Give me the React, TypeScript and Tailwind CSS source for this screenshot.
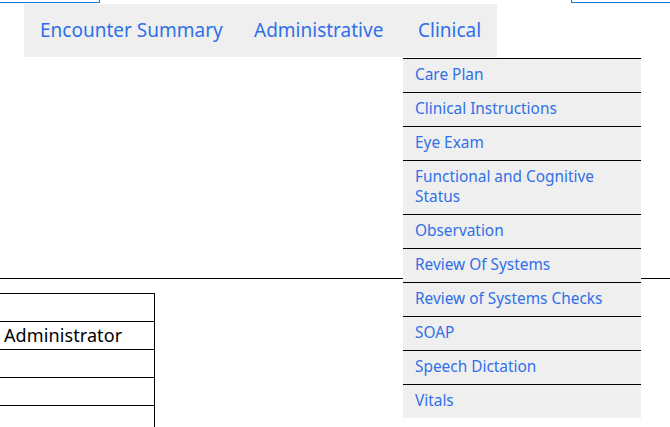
import React from "react";

const items: string[] = [
  "Care Plan",
  "Clinical Instructions",
  "Eye Exam",
  "Functional and Cognitive Status",
  "Observation",
  "Review Of Systems",
  "Review of Systems Checks",
  "SOAP",
  "Speech Dictation",
  "Vitals",
];

export default function App() {
  return (
    <div
      className="relative w-[670px] h-[427px] overflow-hidden bg-white"
      style={{ fontFamily: '"Noto Sans", "Open Sans", sans-serif' }}
    >
      <div className="flex justify-between h-[3px]">
        <div className="w-[100px] h-[3px] border-b border-r border-[#1a73d9]" />
        <div className="w-[99px] h-[3px] border-b border-l border-[#1a73d9]" />
      </div>
      <nav className="mt-[1px] ml-[24px] w-[473px] h-[53px] bg-[#efefef] flex items-center text-[19px] text-[#2f6fe8] pb-[1px]">
        <div className="w-[214px] px-4 whitespace-nowrap">Encounter Summary</div>
        <div className="w-[164px] px-4 whitespace-nowrap">Administrative</div>
        <div className="w-[95px] px-4 whitespace-nowrap">Clinical</div>
      </nav>
      <div className="h-[221px]" />
      <div className="h-px bg-black w-full" />
      <div className="mt-[14px] w-[155px] border-t border-r border-black text-[18px] text-black">
        <div className="h-[28px] border-b border-black" />
        <div className="h-[28px] border-b border-black pl-[4px] leading-[27px] tracking-[0.1px]">Administrator</div>
        <div className="h-[28px] border-b border-black" />
        <div className="h-[28px] border-b border-black" />
        <div className="h-[28px]" />
      </div>
      <div className="absolute left-[403px] top-[58px] w-[238px] bg-[#efefef] text-[15.4px] leading-[20px] text-[#2f6fe8]">
        {items.map((t) => (
          <div key={t} className="border-t border-black pl-3 pr-8 pt-[6px] pb-[7px]">
            {t}
          </div>
        ))}
      </div>
    </div>
  );
}
